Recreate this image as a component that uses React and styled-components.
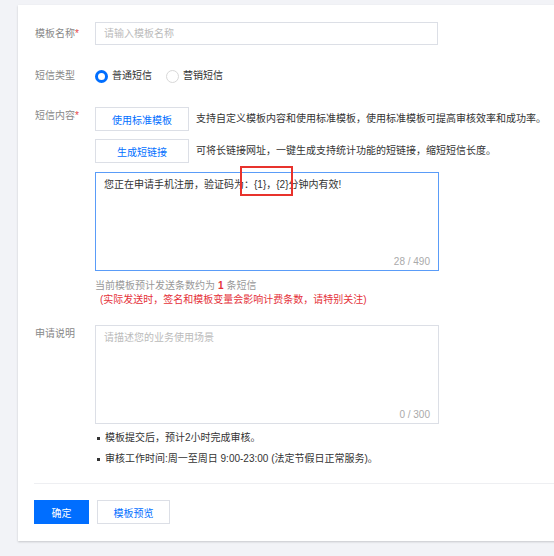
import React from "react";
import styled, { createGlobalStyle } from "styled-components";

const GlobalStyle = createGlobalStyle`
  html, body {
    margin: 0;
    padding: 0;
    background: #f2f3f7;
    font-family: "Liberation Sans", "Noto Sans CJK SC", sans-serif;
    font-size: 10px;
    color: #333;
  }
  * { box-sizing: border-box; }
`;

const Page = styled.div`
  width: 554px;
  height: 556px;
  padding: 5px 0 0 18px;
  overflow: hidden;
`;

const Card = styled.div`
  background: #fff;
  width: 560px;
  padding: 17px 0 17px 16px;
  box-shadow: 0 1px 2px rgba(0, 0, 0, 0.18);
`;

const Row = styled.div`
  display: grid;
  grid-template-columns: 61px 1fr;
  align-items: ${(p) => (p.$center ? "center" : "start")};
  margin-bottom: ${(p) => p.$mb || 0}px;
`;

const Label = styled.div`
  color: #888;
  line-height: 14px;
  padding-left: 1px;
  padding-top: ${(p) => (p.$center ? 0 : 2)}px;
`;

const Required = styled.span`
  color: #e54545;
`;

const TextInput = styled.input`
  width: 343px;
  height: 23px;
  border: 1px solid #dcdfe6;
  padding: 0 8px;
  font: inherit;
  outline: none;
  &::placeholder {
    color: #bbb;
  }
`;

const RadioGroup = styled.div`
  display: flex;
  align-items: center;
  height: 16px;
`;

const RadioItem = styled.label`
  display: flex;
  align-items: center;
  margin-right: 14px;
  line-height: 14px;
  color: #333;
`;

const RadioDot = styled.span`
  width: 13px;
  height: 13px;
  border-radius: 50%;
  margin-right: 4px;
  border: ${(p) => (p.$checked ? "3px solid #006eff" : "1px solid #d8d8d8")};
  background: #fff;
`;

const ActionLine = styled.div`
  display: flex;
  align-items: center;
  margin-bottom: ${(p) => p.$mb || 0}px;
`;

const Button = styled.button`
  height: 24px;
  min-width: ${(p) => p.$w || 55}px;
  padding: 0 12px;
  font: inherit;
  border: 1px solid ${(p) => (p.$primary ? "#006eff" : "#dcdfe6")};
  background: ${(p) => (p.$primary ? "#006eff" : "#fff")};
  color: ${(p) => (p.$primary ? "#fff" : "#006eff")};
  cursor: pointer;
`;

const Tip = styled.span`
  margin-left: 7px;
  color: #333;
  line-height: 14px;
`;

const AreaWrap = styled.div`
  position: relative;
  width: 344px;
  height: ${(p) => p.$h}px;
`;

const TextArea = styled.textarea`
  display: block;
  width: 100%;
  height: 100%;
  resize: none;
  border: 1px solid ${(p) => (p.$focus ? "#5a9cf8" : "#dcdfe6")};
  padding: 5px 8px;
  font: inherit;
  line-height: 14px;
  color: #333;
  outline: none;
  &::placeholder {
    color: #bbb;
  }
`;

const Counter = styled.span`
  position: absolute;
  right: 9px;
  bottom: 3px;
  color: #aaa;
  line-height: 12px;
`;

const Highlight = styled.div`
  position: absolute;
  left: 145px;
  top: -6px;
  width: 53px;
  height: 30px;
  border: 2px solid #e8322c;
  pointer-events: none;
`;

const Hint = styled.div`
  margin-top: 8px;
  line-height: 14px;
  color: #999;
`;

const HintNum = styled.b`
  color: #e5323a;
  margin: 0 3px;
`;

const Warn = styled.div`
  line-height: 14px;
  color: #e5323a;
  padding-left: 5px;
`;

const Notes = styled.ul`
  list-style: none;
  margin: 7px 0 0;
  padding: 0;
`;

const Note = styled.li`
  display: flex;
  align-items: center;
  line-height: 14px;
  margin-bottom: 7px;
  color: #333;
  &::before {
    content: "";
    width: 3px;
    height: 3px;
    background: #333;
    margin: 0 5px 0 2px;
  }
`;

const Divider = styled.div`
  height: 1px;
  background: #eeeff2;
  margin: 10px 0 16px;
`;

const Footer = styled.div`
  display: flex;
  gap: 8px;
`;

export default function App() {
  return (
    <>
      <GlobalStyle />
      <Page>
        <Card>
          <Row $center $mb={23}>
            <Label $center>
              模板名称<Required>*</Required>
            </Label>
            <TextInput placeholder="请输入模板名称" />
          </Row>

          <Row $center $mb={23}>
            <Label $center>短信类型</Label>
            <RadioGroup>
              <RadioItem>
                <RadioDot $checked />
                普通短信
              </RadioItem>
              <RadioItem>
                <RadioDot />
                营销短信
              </RadioItem>
            </RadioGroup>
          </Row>

          <Row $mb={18}>
            <Label>
              短信内容<Required>*</Required>
            </Label>
            <div>
              <ActionLine $mb={8}>
                <Button $w={94}>使用标准模板</Button>
                <Tip>支持自定义模板内容和使用标准模板，使用标准模板可提高审核效率和成功率。</Tip>
              </ActionLine>
              <ActionLine $mb={9}>
                <Button $w={94}>生成短链接</Button>
                <Tip>可将长链接网址，一键生成支持统计功能的短链接，缩短短信长度。</Tip>
              </ActionLine>
              <AreaWrap $h={99}>
                <TextArea
                  $focus
                  readOnly
                  defaultValue="您正在申请手机注册，验证码为：{1}，{2}分钟内有效!"
                />
                <Counter>28 / 490</Counter>
                <Highlight />
              </AreaWrap>
              <Hint>
                当前模板预计发送条数约为<HintNum>1</HintNum>条短信
              </Hint>
              <Warn>(实际发送时，签名和模板变量会影响计费条数，请特别关注)</Warn>
            </div>
          </Row>

          <Row>
            <Label>申请说明</Label>
            <div>
              <AreaWrap $h={99}>
                <TextArea placeholder="请描述您的业务使用场景" />
                <Counter>0 / 300</Counter>
              </AreaWrap>
              <Notes>
                <Note>模板提交后，预计2小时完成审核。</Note>
                <Note>审核工作时间:周一至周日 9:00-23:00 (法定节假日正常服务)。</Note>
              </Notes>
            </div>
          </Row>

          <Divider />

          <Footer>
            <Button $primary $w={55}>确定</Button>
            <Button $w={73}>模板预览</Button>
          </Footer>
        </Card>
      </Page>
    </>
  );
}
